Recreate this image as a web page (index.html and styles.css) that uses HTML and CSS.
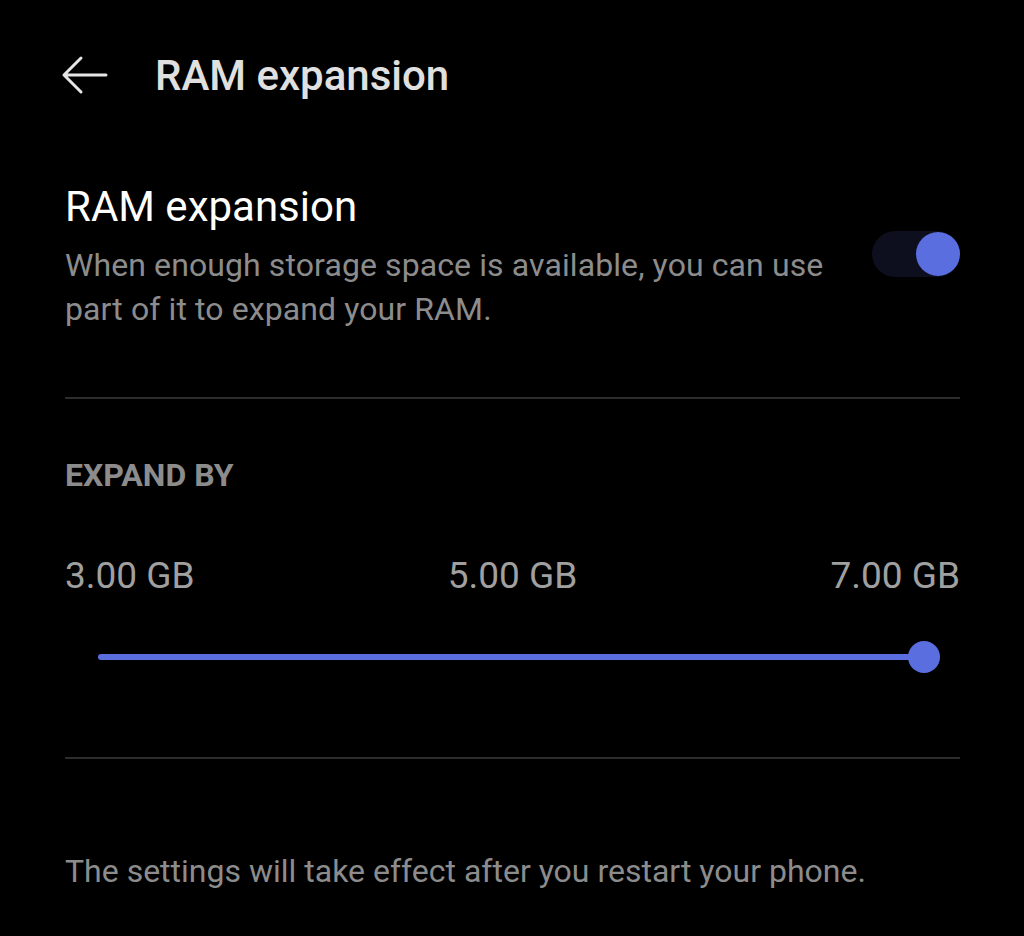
FILE: index.html
```html
<!DOCTYPE html>
<html>
<head>
    <title>RAM expansion</title>
    <link rel="stylesheet" href="styles.css">
</head>
<body>
    <div class="screen">
        <div class="top-bar">
            <svg class="back-icon" width="48" height="40" viewBox="0 0 48 40">
                <path d="M46 20 H4 M21 3 L4 20 L21 37" fill="none" stroke="#e6e6e6" stroke-width="3" stroke-linecap="round" stroke-linejoin="round"/>
            </svg>
            <h1 class="top-title">RAM expansion</h1>
        </div>

        <div class="switch-row">
            <div class="switch-text">
                <p class="item-title">RAM expansion</p>
                <p class="item-desc">When enough storage space is available, you can use part of it to expand your RAM.</p>
            </div>
            <div class="toggle">
                <div class="toggle-knob"></div>
            </div>
        </div>

        <div class="divider"></div>

        <div class="section-label">EXPAND BY</div>

        <div class="size-labels">
            <span>3.00 GB</span>
            <span>5.00 GB</span>
            <span>7.00 GB</span>
        </div>
        <div class="slider">
            <div class="slider-track"></div>
            <div class="slider-thumb"></div>
        </div>

        <div class="divider lower"></div>

        <p class="note">The settings will take effect after you restart your phone.</p>
    </div>
</body>
</html>
```

FILE: styles.css
```css
body {
    margin: 0;
    padding: 0;
    background-color: #000;
    font-family: Roboto, "Noto Sans", sans-serif;
    width: 1024px;
    height: 936px;
    overflow: hidden;
}

.screen {
    padding: 0 64px 0 65px;
}

.top-bar {
    display: flex;
    align-items: center;
    height: 150px;
    margin-left: -5px;
}

.back-icon {
    margin-right: 47px;
}

.top-title {
    margin: 0;
    font-size: 42px;
    font-weight: 500;
    color: #e0e0e0;
}

.switch-row {
    display: flex;
    align-items: center;
    justify-content: space-between;
    margin-top: 32px;
    padding-bottom: 66px;
}

.switch-text {
    width: 790px;
}

.item-title {
    margin: 0 0 11px 0;
    font-size: 42px;
    line-height: 50px;
    color: #fff;
}

.item-desc {
    margin: 0;
    font-size: 32px;
    letter-spacing: 0.1px;
    line-height: 44px;
    color: #8c8c8c;
}

.toggle {
    position: relative;
    width: 88px;
    height: 46px;
    border-radius: 23px;
    background-color: #0d0f1f;
    margin-top: -6px;
}

.toggle-knob {
    position: absolute;
    right: 0;
    top: 1px;
    width: 44px;
    height: 44px;
    border-radius: 50%;
    background-color: #5a6ee0;
}

.divider {
    height: 2px;
    background-color: #2c2c2c;
}

.section-label {
    margin-top: 58px;
    font-size: 32px;
    font-weight: 700;
    color: #8c8c8c;
    line-height: 36px;
}

.size-labels {
    display: flex;
    justify-content: space-between;
    margin-top: 61px;
    font-size: 37px;
    color: #a0a0a0;
    line-height: 44px;
}

.slider {
    position: relative;
    height: 36px;
    margin: 41px 20px 0 33px;
}

.slider-track {
    position: absolute;
    left: 0;
    right: 14px;
    top: 15px;
    height: 6px;
    border-radius: 3px;
    background-color: #5a6ee0;
}

.slider-thumb {
    position: absolute;
    right: 0;
    top: 2px;
    width: 32px;
    height: 32px;
    border-radius: 50%;
    background-color: #5a6ee0;
}

.divider.lower {
    margin-top: 82px;
}

.note {
    margin: 90px 0 0 0;
    font-size: 32px;
    line-height: 44px;
    color: #8c8c8c;
}
```
